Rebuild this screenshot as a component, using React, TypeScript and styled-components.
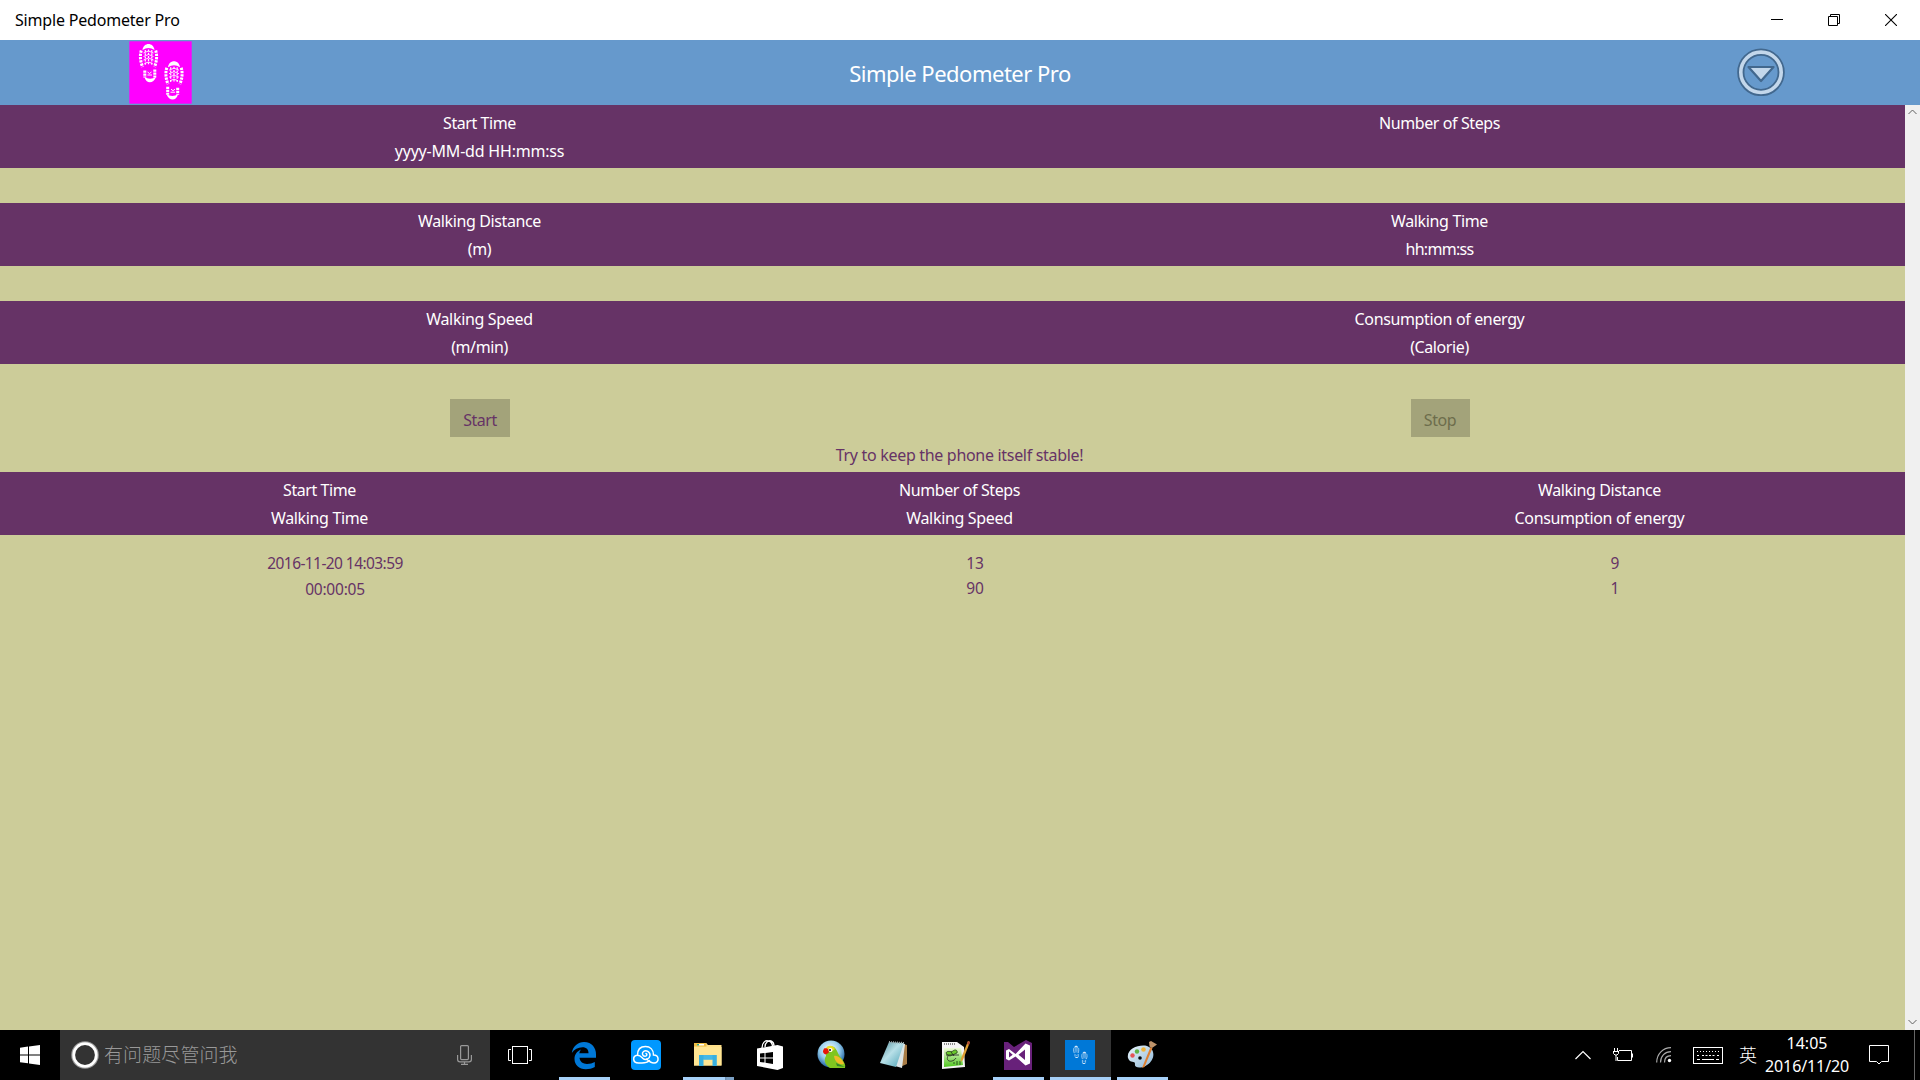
import React from "react";
import styled, { createGlobalStyle } from "styled-components";

const plum = "#663366";
const sand = "#cccc99";

const GlobalStyle = createGlobalStyle`
  * { box-sizing: border-box; }
  html, body { margin: 0; padding: 0; }
  body {
    width: 1920px;
    height: 1080px;
    overflow: hidden;
    font-family: "Noto Sans", "Open Sans", "Noto Sans CJK SC", sans-serif;
    font-size: 16px;
  }
  svg { display: block; flex: none; }
`;

const Screen = styled.div`
  width: 1920px;
  height: 1080px;
  display: flex;
  flex-direction: column;
  background: ${sand};
`;

const TitleBar = styled.div`
  height: 40px;
  flex: none;
  display: flex;
  justify-content: space-between;
  background: #fff;
  color: #000;
`;

const WindowName = styled.div`
  padding-left: 15px;
  line-height: 40px;
  font-size: 16px;
  letter-spacing: -0.19px;
  white-space: nowrap;
`;

const WindowButtons = styled.div`
  padding-right: 1px;
  display: flex;
`;

const WindowButton = styled.div`
  width: 57px;
  height: 40px;
  display: flex;
  align-items: center;
  justify-content: center;
`;

const Header = styled.header`
  height: 65px;
  flex: none;
  display: grid;
  grid-template-columns: 320px 1fr 320px;
  align-items: center;
  background: #6699cc;
  color: #fff;
`;

const HeaderCell = styled.div<{ $right?: boolean }>`
  display: flex;
  justify-content: center;
  padding: ${(p) => (p.$right ? "0 0 1px 1px" : "0")};
`;

const HeaderTitle = styled.h1`
  margin: 0;
  padding-top: 1px;
  text-align: center;
  font-size: 22px;
  font-weight: 400;
  line-height: 30px;
  letter-spacing: -0.5px;
`;

const Body = styled.main`
  flex: 1;
  min-height: 0;
  display: flex;
`;

const Content = styled.div`
  width: 1905px;
  overflow: hidden;
  flex: none;
`;

const Band = styled.div<{ $cols: number }>`
  width: 1920px;
  height: 63px;
  padding: 4px 0 3px;
  display: grid;
  grid-template-columns: repeat(${(p) => p.$cols}, 1fr);
  background: ${plum};
  color: #fff;
`;

const BandCell = styled.div`
  padding-right: 1px;
  text-align: center;
  line-height: 28px;
`;

const Reading = styled.div`
  height: 35px;
`;

const Actions = styled.div`
  width: 1920px;
  height: 38px;
  display: grid;
  grid-template-columns: 1fr 1fr;
  justify-items: center;
`;

const ActionButton = styled.button<{ $width: number; $off?: boolean }>`
  width: ${(p) => p.$width}px;
  height: 38px;
  padding: 4px 0 0;
  border: 0;
  font: inherit;
  line-height: 34px;
  letter-spacing: -0.45px;
  background: #a3a37a;
  color: ${(p) => (p.$off ? "#6d6d4c" : plum)};
`;

const Hint = styled.p`
  width: 1919px;
  height: 35px;
  margin: 0;
  padding-top: 4px;
  text-align: center;
  line-height: 28px;
  letter-spacing: -0.31px;
  color: ${plum};
`;

const Record = styled.div`
  width: 1920px;
  padding: 15px 0 0 30px;
  display: grid;
  grid-template-columns: 610px 670px 610px;
  color: ${plum};
`;

const RecordCell = styled.div<{ $number: boolean }>`
  padding-top: ${(p) => (p.$number ? 1 : 0)}px;
  text-align: center;
  font-size: 15.5px;
  line-height: ${(p) => (p.$number ? 25 : 26)}px;
`;

const Line = styled.div<{ $track?: number }>`
  white-space: nowrap;
  letter-spacing: ${(p) => p.$track || 0}px;
  min-height: 1em;
`;

const ScrollBar = styled.div`
  width: 15px;
  flex: none;
  padding: 4px 0 5px;
  display: flex;
  flex-direction: column;
  justify-content: space-between;
  align-items: center;
  background: #f0f0f0;
`;

const Taskbar = styled.footer`
  height: 50px;
  flex: none;
  display: flex;
  background: #000;
  color: #fff;
`;

const StartButton = styled.div`
  width: 60px;
  display: flex;
  align-items: center;
  justify-content: center;
`;

const SearchBox = styled.div`
  width: 430px;
  padding: 0 18px 0 11px;
  display: flex;
  align-items: center;
  background: #333;
  color: #999;
`;

const SearchText = styled.span`
  flex: 1;
  margin-left: 5px;
  padding-bottom: 2px;
  font-family: "Noto Sans CJK SC", sans-serif;
  font-weight: 300;
  font-size: 19px;
  line-height: 28px;
  letter-spacing: 0.1px;
`;

const TaskView = styled.div`
  width: 63px;
  padding-left: 18px;
  display: flex;
  align-items: center;
`;

const Slot = styled.div`
  width: 62px;
  height: 50px;
  display: flex;
  justify-content: center;
`;

const TaskButton = styled.div<{ $mark?: "on" | "stack"; $active?: boolean }>`
  width: ${(p) => (p.$active ? 61 : 51)}px;
  padding-top: 10px;
  display: flex;
  justify-content: center;
  background: ${(p) => (p.$active ? "#333" : "transparent")};
  border-bottom: 3px solid ${(p) => (p.$mark ? "#a6d0f8" : "transparent")};
  ${(p) =>
    p.$mark === "stack" &&
    "border-image: linear-gradient(90deg, #a6d0f8 40px, #6a8bad 40px, #7ba0c4 42px) 3;"}
`;

const Tray = styled.div`
  margin-left: auto;
  display: flex;
  align-items: center;
`;

const TrayItem = styled.div<{ $width: number }>`
  width: ${(p) => p.$width}px;
  flex: none;
`;

const Language = styled.div`
  width: 26px;
  padding-bottom: 2px;
  font-family: "Noto Sans CJK SC", sans-serif;
  font-weight: 300;
  font-size: 18px;
  line-height: 26px;
`;

const Clock = styled.div`
  width: 84px;
  margin-right: 20px;
  text-align: center;
  font-size: 16px;
  line-height: 23px;
`;

const DesktopEdge = styled.div`
  width: 6px;
  height: 50px;
  border-left: 1px solid #666;
`;

function Print() {
  return (
    <>
      <path d="M3 6.500C4-1.500 14-1.500 15 6.500Q12 4.500 9 4.500Q6 4.500 3 6.500Z" fill="currentColor" stroke="none" />
      <path d="M1.800 7C.2 12 .8 18 3.200 23.500M16.200 7C17.800 12 17.200 18 15 23.500" strokeWidth="3" strokeDasharray="2.300 1" />
      <path d="M5.800 6.500V22M9 6V22M12.300 6.500V22" strokeWidth="1.200" strokeDasharray="2 1.200" />
      <path d="M4 9.500L9 7.500L14 9.500M4 13L9 11L14 13M4 16.500L9 14.500L14 16.500M5 20L9 18.500L13 20" strokeWidth=".9" />
      <path d="M5.300 27V34M15.300 26V34" strokeWidth="3" strokeDasharray="2.200 .8" />
      <path d="M8 28.500L10 30L12 28.500M8 31.500H12.500" strokeWidth="1" />
      <path d="M5 33.500C6.500 40.500 14 40.500 16.500 33.500Q10.500 37 5 33.500Z" fill="currentColor" stroke="none" />
    </>
  );
}

const Feet = styled.g<{ $ink: string }>`
  color: ${(p) => p.$ink};
  stroke: currentColor;
  fill: none;
`;

const AppLogo = () => (
  <svg width="63" height="63" viewBox="0 0 63 63">
    <rect x=".3" y=".3" width="62.400" height="62.400" fill="#ff00ff" />
    <Feet $ink="#fff">
      <g transform="translate(10.500 2.500)"><Print /></g>
      <g transform="translate(54 19.700) scale(-1 1)"><Print /></g>
    </Feet>
  </svg>
);

const TaskLogo = () => (
  <svg width="30" height="30" viewBox="0 0 30 30">
    <rect width="30" height="30" fill="#0078d7" />
    <Feet $ink="#d4e8fa">
      <g transform="translate(8.300 5.700) scale(.32)"><Print /></g>
      <g transform="translate(22.300 11.700) scale(-.32 .32)"><Print /></g>
    </Feet>
  </svg>
);

const DropIcon = () => (
  <svg width="48" height="48" viewBox="0 0 48 48">
    <circle cx="24" cy="24.300" r="20.200" fill="none" stroke="#42688e" strokeWidth="7.200" />
    <circle cx="24" cy="24.300" r="20.200" fill="none" stroke="#c3d7eb" strokeWidth="3.600" />
    <path d="M11.500 19H36.500L24 33Z" fill="#c3d7eb" stroke="#42688e" strokeWidth="2.200" strokeLinejoin="round" />
  </svg>
);

const WindowsLogo = () => (
  <svg width="20" height="20" viewBox="0 0 20 20" fill="#fff">
    <path d="M0 2.700L8 1.600V9.400H0ZM9 1.400L20 0V9.400H9ZM0 10.400H8V18.300L0 17.200ZM9 10.400H20V20L9 18.500Z" />
  </svg>
);

const Mic = () => (
  <svg width="15" height="20" viewBox="0 0 15 20" fill="none" stroke="#999" strokeWidth="1.200">
    <rect x="3.600" y=".6" width="7.800" height="14" rx="1" />
    <path d="M.6 10V14.500Q.6 16.800 3 16.800H12Q14.400 16.800 14.400 14.500V10M7.500 17V19M4 19.300H11" />
  </svg>
);

const TaskViewIcon = () => (
  <svg width="24" height="18" viewBox="0 0 24 18" fill="none" stroke="#fff">
    <rect x="4.500" y=".5" width="15" height="17" />
    <path d="M3 3.500H.5V14.500H3M21 3.500H23.500V14.500H21" />
  </svg>
);

const Edge = () => (
  <svg width="26" height="30" viewBox="0 0 26 30">
    <path
      d="M.8 13C2 6 7 2 13 2C21 2 25 8 25 14.500V17.800H8.500C9 22 12 24 16 24C19 24 21.500 23.200 23.800 22V27C21 28.500 18 29.200 14.800 29.200C8 29.200 3.500 25 3.500 19C3.500 14.500 6 11.500 10 9.600C9 10.800 8.500 12 8.300 13.300H17.500C17.500 9.500 15.500 7.300 11.500 7.300C7 7.300 3.200 9.500.8 13Z"
      fill="#0078d7"
    />
  </svg>
);

const Cloud = () => (
  <svg width="30" height="30" viewBox="0 0 30 30" fill="none" stroke="#fff" strokeWidth="1.500" strokeLinecap="round">
    <rect width="30" height="30" rx="4" fill="#0098ff" stroke="none" />
    <path d="M18.500 20.500C16.500 22.500 14 23 11 23H7.500C1.500 23 1 15.800 6.500 15.200C6.500 9 10 6.500 14.500 6.500C19 6.500 22.500 9.500 22.500 15C28.500 15 28.500 23 23 23C19.500 23 17.500 21 15.500 19" />
    <path d="M6.500 15.200C9.500 15.200 10.500 17 12 18.500C14 20.500 18.500 19.500 19 15.500C19.300 11.500 15 9.700 12.500 11.500C10.500 13.200 11.500 16.300 14 16.300C16 16.300 16.500 14 15 13.500" />
  </svg>
);

const Explorer = () => (
  <svg width="28" height="30" viewBox="0 0 28 30">
    <path d="M0 3.500Q0 3 .5 3H12L14 5H27.500V25.500H0Z" fill="#ffe08a" />
    <path d="M0 3H12.500V6.500H0Z" fill="#eebd44" />
    <path d="M3 4H10V5.500H3Z" fill="#fff" />
    <path d="M3 4H5V5.500H3Z" fill="#32a883" />
    <path d="M0 7H27.500V25.500H0Z" fill="#ffe593" />
    <path d="M5 26V15H22.800V26H18.500V19.500H9.500V26Z" fill="#37afe0" />
    <path d="M9.500 19.500V15H18.500V19.500Z" fill="#45b8e8" />
  </svg>
);

const Store = () => (
  <svg width="26" height="30" viewBox="0 0 26 30">
    <path d="M5 8C5 2 9 0 11.500 1C14 1.500 15.500 4 15.500 7M8 7C8 2 12 0 14.500 1C16.500 2 17 4 17 6" fill="none" stroke="#fff" strokeWidth="1.300" />
    <path d="M0 8.500L20.500 5L26 6.500V28L20.500 30L0 26Z" fill="#fff" />
    <path d="M3 13.500L7.500 13V17.500H3ZM8.500 12.900L16 12V17.500H8.500ZM3 18.500H7.500V22.500L3 22ZM8.500 18.500H16V24L8.500 22.800Z" fill="#000" />
  </svg>
);

const Parrot = () => (
  <svg width="30" height="30" viewBox="0 0 30 30">
    <defs>
      <radialGradient id="bubble" cx=".45" cy=".35" r=".65">
        <stop offset="0" stopColor="#fff" />
        <stop offset=".55" stopColor="#96cdec" />
        <stop offset="1" stopColor="#1b5c9c" />
      </radialGradient>
    </defs>
    <circle cx="14" cy="14" r="13.500" fill="url(#bubble)" />
    <path d="M9 13C8 8 13 5 17 7C20 9 21 15 25 19C27 22 29 25 28 28H13C8 25 6.500 20 9 16Z" fill="#80c51f" />
    <path d="M8.500 9C10 4.500 16 4.500 18 9L14 12Z" fill="#e9dd22" />
    <path d="M7 8.500C11 7.500 12.500 10 11.500 13L8.500 14.500Q4.500 13 7 8.500Z" fill="#e81508" />
    <circle cx="13.500" cy="10" r="2" fill="#fff" />
    <circle cx="13" cy="10" r="1" fill="#111" />
    <path d="M17 16C21 15 25 19 27 24C23 25 18 23 17 16Z" fill="#f0bb27" />
    <path d="M19 23L28 27L20 26Z" fill="#32832b" />
  </svg>
);

const Notepad = () => (
  <svg width="28" height="30" viewBox="0 0 28 30">
    <defs>
      <linearGradient id="paper" x1="0" y1="0" x2="1" y2="1">
        <stop offset="0" stopColor="#4e8996" />
        <stop offset=".45" stopColor="#b8e0e8" />
        <stop offset="1" stopColor="#49a0b4" />
      </linearGradient>
    </defs>
    <path d="M23 4L27 5V24L20 27Z" fill="#a77b45" />
    <path d="M20 3L25 4L22 28L15 26Z" fill="#dce4e6" />
    <path d="M9 2L24 3L16 27L0 23Z" fill="url(#paper)" />
    <path d="M9 2L24 3" stroke="#9ba6a8" strokeWidth="2" strokeDasharray="1 1" />
  </svg>
);

const NotepadPlus = () => (
  <svg width="28" height="30" viewBox="0 0 28 30">
    <defs>
      <linearGradient id="leaf" x1="0" y1="0" x2="0" y2="1">
        <stop offset="0" stopColor="#eefbd8" />
        <stop offset="1" stopColor="#4fc61e" />
      </linearGradient>
    </defs>
    <path d="M0 2H15L22 7L23 27L0 29Z" fill="#f4f4f4" />
    <path d="M2 8H19L21 25L2 27Z" fill="url(#leaf)" />
    <path d="M2 4H14" stroke="#888" strokeWidth="2" strokeDasharray="1 1" />
    <path d="M4 13C5 10 9 12.500 11 11C13 9 16 10 15 13L8 16Q5 16 4 13Z" fill="#69c92b" stroke="#263f1b" strokeWidth=".8" />
    <path d="M4 15H17M6 16C3 22 11 23 14 18M9 12L12 16" fill="none" stroke="#222" strokeWidth=".8" />
    <path d="M12 22V24M15 21V25M18 21V25" stroke="#28541c" />
    <path d="M26 1L28 2L21 20L18.500 22L19 18.500Z" fill="#dfa034" />
    <path d="M26 1L28 2L27 5L25 4Z" fill="#a94735" />
  </svg>
);

const VisualStudio = () => (
  <svg width="28" height="30" viewBox="0 0 28 30">
    <path d="M0 2H4L10 7L22 0L28 3V30H0Z" fill="#68217a" />
    <path d="M2 10.500L5 9L11.500 14L21.500 3.500L26 5.500V23.500L21.500 25.500L11.500 16.500L5 20.500L2 19Z" fill="#fff" />
    <path d="M5 11.500V17.500L8.700 14.800ZM14.500 14.800L21 9.500V20Z" fill="#68217a" />
  </svg>
);

const Paint = () => (
  <svg width="30" height="30" viewBox="0 0 30 30">
    <defs>
      <linearGradient id="palette" x1="0" y1="0" x2="1" y2="1">
        <stop offset="0" stopColor="#eaf5fb" />
        <stop offset="1" stopColor="#8fb8d8" />
      </linearGradient>
    </defs>
    <path d="M1 18C-1 9 12 4 20 6C29 9 28 20 20 25C14 29 7 28 8 24C8 20 3 24 1 18Z" fill="url(#palette)" />
    <circle cx="5.500" cy="15.500" r="2.200" fill="#e55357" />
    <circle cx="10" cy="11.500" r="2.200" fill="#5fb345" />
    <circle cx="16.500" cy="9.500" r="2.300" fill="#f0b43c" />
    <circle cx="13" cy="18" r="1.800" fill="#05080c" />
    <path d="M23.500 7L15 28L17.500 27L25.500 8Z" fill="#df8031" />
    <path d="M22 2L24 1L30 4.500L25 8L22.500 6.500Z" fill="#be936a" />
  </svg>
);

const apps: { icon: React.ReactNode; mark?: "on" | "stack"; active?: boolean }[] = [
  { icon: <Edge />, mark: "on" },
  { icon: <Cloud /> },
  { icon: <Explorer />, mark: "stack" },
  { icon: <Store /> },
  { icon: <Parrot /> },
  { icon: <Notepad /> },
  { icon: <NotepadPlus /> },
  { icon: <VisualStudio />, mark: "on" },
  { icon: <TaskLogo />, mark: "on", active: true },
  { icon: <Paint />, mark: "on" },
];

type Label = [text: string, track?: number];

const readings: Label[][][] = [
  [[["Start Time", -0.42], ["yyyy-MM-dd HH:mm:ss", -0.2]], [["Number of Steps", -0.4], [""]]],
  [[["Walking Distance", -0.38], ["(m)", -0.4]], [["Walking Time", -0.36], ["hh:mm:ss", -0.7]]],
  [[["Walking Speed", -0.32], ["(m/min)", -0.4]], [["Consumption of energy", -0.36], ["(Calorie)", -0.4]]],
];

const historyHead: Label[][] = [
  [["Start Time", -0.42], ["Walking Time", -0.36]],
  [["Number of Steps", -0.4], ["Walking Speed", -0.32]],
  [["Walking Distance", -0.38], ["Consumption of energy", -0.36]],
];

const history: Label[][] = [
  [["2016-11-20 14:03:59", -0.58], ["00:00:05", -0.22]],
  [["13"], ["90"]],
  [["9"], ["1"]],
];

function BandRow({ cells }: { cells: Label[][] }) {
  return (
    <Band $cols={cells.length}>
      {cells.map((cell, i) => (
        <BandCell key={i}>
          {cell.map(([text, track], j) => (
            <Line key={j} $track={track}>{text}</Line>
          ))}
        </BandCell>
      ))}
    </Band>
  );
}

export default function App() {
  return (
    <Screen>
      <GlobalStyle />
      <TitleBar>
        <WindowName>Simple Pedometer Pro</WindowName>
        <WindowButtons>
          <WindowButton>
            <svg width="12" height="12" viewBox="0 0 12 12"><path d="M0 5.500H12" stroke="#000" /></svg>
          </WindowButton>
          <WindowButton>
            <svg width="12" height="12" viewBox="0 0 12 12" fill="none" stroke="#000">
              <path d="M.5 2.500H9.500V11.500H.5ZM2.500 2.500V.5H11.500V9.500H9.500" />
            </svg>
          </WindowButton>
          <WindowButton>
            <svg width="12" height="12" viewBox="0 0 12 12"><path d="M0 0L12 12M12 0L0 12" stroke="#000" strokeWidth="1.100" /></svg>
          </WindowButton>
        </WindowButtons>
      </TitleBar>
      <Header>
        <HeaderCell><AppLogo /></HeaderCell>
        <HeaderTitle>Simple Pedometer Pro</HeaderTitle>
        <HeaderCell $right><DropIcon /></HeaderCell>
      </Header>
      <Body>
        <Content>
          {readings.map((cells, i) => (
            <React.Fragment key={i}>
              <BandRow cells={cells} />
              <Reading />
            </React.Fragment>
          ))}
          <Actions>
            <ActionButton $width={60}>Start</ActionButton>
            <ActionButton $width={59} $off>Stop</ActionButton>
          </Actions>
          <Hint>Try to keep the phone itself stable!</Hint>
          <BandRow cells={historyHead} />
          <Record>
            {history.map((cell, i) => (
              <RecordCell key={i} $number={i > 0}>
                {cell.map(([text, track]) => (
                  <Line key={text} $track={track}>{text}</Line>
                ))}
              </RecordCell>
            ))}
          </Record>
        </Content>
        <ScrollBar>
          <svg width="9" height="6" viewBox="0 0 9 6"><path d="M.5 5L4.500 1L8.500 5" fill="none" stroke="#606060" /></svg>
          <svg width="9" height="6" viewBox="0 0 9 6"><path d="M.5 1L4.500 5L8.500 1" fill="none" stroke="#606060" /></svg>
        </ScrollBar>
      </Body>
      <Taskbar>
        <StartButton><WindowsLogo /></StartButton>
        <SearchBox>
          <svg width="28" height="28" viewBox="0 0 28 28" fill="none">
            <circle cx="14" cy="14" r="13" stroke="#999" strokeWidth="1.600" />
            <circle cx="14" cy="14" r="11.300" stroke="#fff" strokeWidth="2.800" />
          </svg>
          <SearchText>有问题尽管问我</SearchText>
          <Mic />
        </SearchBox>
        <TaskView><TaskViewIcon /></TaskView>
        {apps.map((app, i) => (
          <Slot key={i}>
            <TaskButton $mark={app.mark} $active={app.active}>{app.icon}</TaskButton>
          </Slot>
        ))}
        <Tray>
          <TrayItem $width={38}>
            <svg width="16" height="10" viewBox="0 0 16 10"><path d="M.5 9L8 1.500L15.500 9" fill="none" stroke="#fff" strokeWidth="1.200" /></svg>
          </TrayItem>
          <TrayItem $width={43}>
            <svg width="20" height="14" viewBox="0 0 20 14" fill="none" stroke="#fff">
              <path d="M6 2.500H18.500V12.500H4.500V9M19.500 5.500V9.500M1.500 0V3M4.500 0V3M0 3.500H5.500M.5 3.500V5.500L2 7H4L5.500 5.500V3M3 7V13" />
            </svg>
          </TrayItem>
          <TrayItem $width={37}>
            <svg width="16" height="16" viewBox="0 0 16 16" fill="none">
              <path d="M.7 15.500C.7 7 7 .7 15 .7M4.500 15.500C4.500 9 9 4.700 15 4.700M8.500 15.500C8.500 11 11 8.700 15 8.700" stroke="#aaa" strokeWidth="1.200" />
              <circle cx="13.500" cy="13.500" r="1.700" fill="#fff" />
            </svg>
          </TrayItem>
          <TrayItem $width={46}>
            <svg width="30" height="17" viewBox="0 0 30 17" fill="none" stroke="#fff">
              <rect x=".5" y=".5" width="29" height="16" />
              <path d="M4 4.500H27" strokeDasharray="1 2" />
              <path d="M4 8.500H7M9 8.500H22M24 8.500H27" strokeDasharray="2 1.500" />
              <path d="M4 12.500H7M9 12.500H21M23 12.500H26" />
            </svg>
          </TrayItem>
          <Language>英</Language>
          <Clock>
            <Line>14:05</Line>
            <Line $track={-0.1}>2016/11/20</Line>
          </Clock>
          <TrayItem $width={45}>
            <svg width="20" height="20" viewBox="0 0 20 20" fill="none" stroke="#fff">
              <path d="M.5 .5H19.500V16.500H12.500L10 19L7.500 16.500H.5Z" />
            </svg>
          </TrayItem>
          <DesktopEdge />
        </Tray>
      </Taskbar>
    </Screen>
  );
}
